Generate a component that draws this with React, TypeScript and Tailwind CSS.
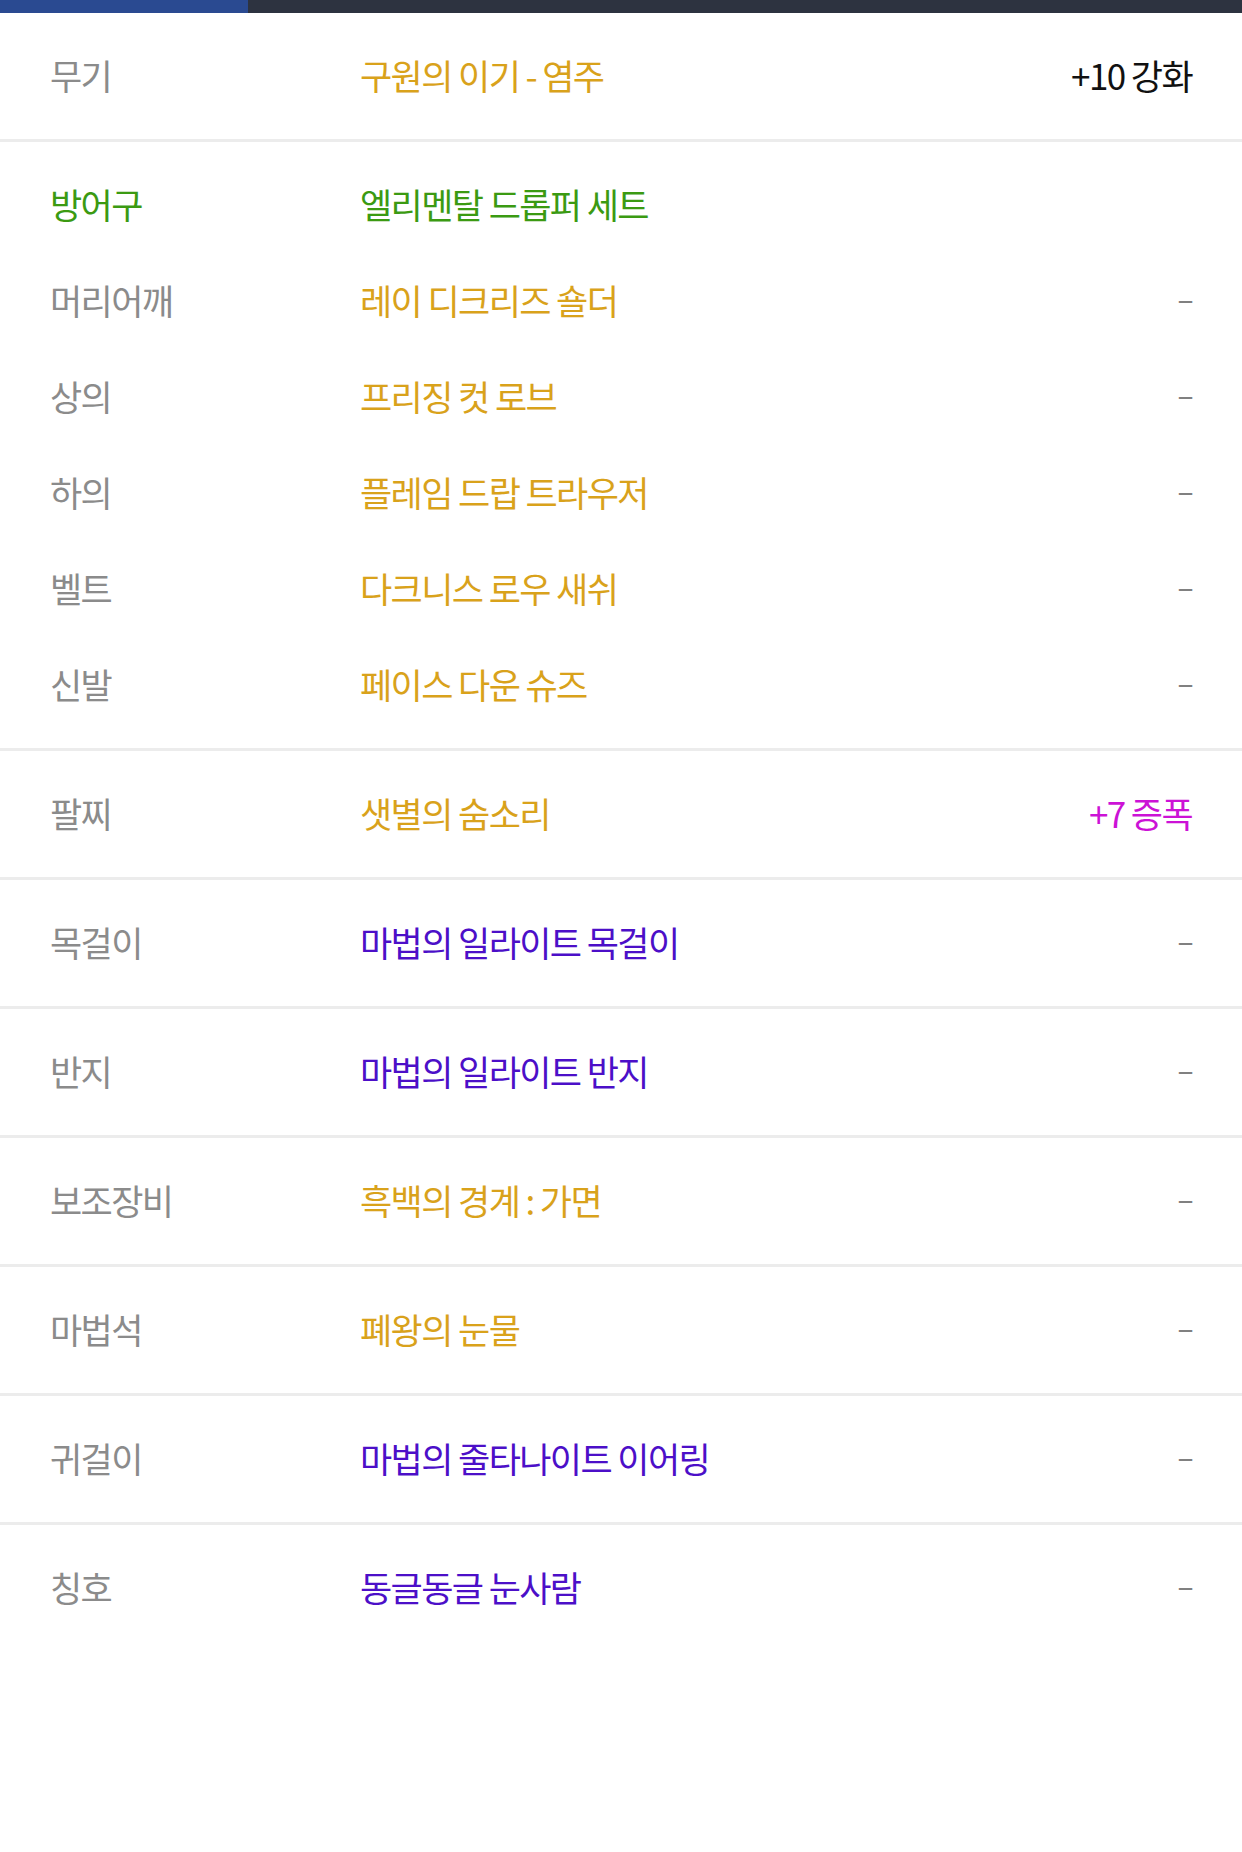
import React from "react";

type Row = { label: string; value: string; color: string; labelColor?: string; right?: string; rightColor?: string };

const GOLD = "text-[#d9a21b]";
const GREEN = "text-[#3b9a12]";
const PURPLE = "text-[#4c0fc8]";

const sections: Row[][] = [
  [{ label: "무기", value: "구원의 이기 - 염주", color: GOLD, right: "+10 강화", rightColor: "text-[#111111]" }],
  [
    { label: "방어구", value: "엘리멘탈 드롭퍼 세트", color: GREEN, labelColor: GREEN, right: "" },
    { label: "머리어깨", value: "레이 디크리즈 숄더", color: GOLD },
    { label: "상의", value: "프리징 컷 로브", color: GOLD },
    { label: "하의", value: "플레임 드랍 트라우저", color: GOLD },
    { label: "벨트", value: "다크니스 로우 새쉬", color: GOLD },
    { label: "신발", value: "페이스 다운 슈즈", color: GOLD },
  ],
  [{ label: "팔찌", value: "샛별의 숨소리", color: GOLD, right: "+7 증폭", rightColor: "text-[#cc12d6]" }],
  [{ label: "목걸이", value: "마법의 일라이트 목걸이", color: PURPLE }],
  [{ label: "반지", value: "마법의 일라이트 반지", color: PURPLE }],
  [{ label: "보조장비", value: "흑백의 경계 : 가면", color: GOLD }],
  [{ label: "마법석", value: "폐왕의 눈물", color: GOLD }],
  [{ label: "귀걸이", value: "마법의 줄타나이트 이어링", color: PURPLE }],
  [{ label: "칭호", value: "동글동글 눈사람", color: PURPLE }],
];

export default function App() {
  return (
    <div
      className="w-[1242px] h-[1852px] bg-white overflow-hidden"
      style={{ fontFamily: '"Noto Sans CJK KR", "Noto Sans", sans-serif' }}
    >
      <div className="flex h-[13px] bg-[#2d3340]">
        <div className="w-[248px] bg-[#2a4a91]" />
      </div>
      {sections.map((sec, si) => (
        <div
          key={si}
          className={
            "py-[15px] px-[50px] " +
            (si < sections.length - 1 ? "border-b-[3px] border-[#ececec]" : "")
          }
        >
          {sec.map((r, ri) => (
            <div
              key={ri}
              className="h-[96px] pb-[4px] flex items-center text-[35px] tracking-[-1.6px] leading-none"
            >
              <div className={"w-[310px] shrink-0 " + (r.labelColor ?? "text-[#8b8b8b]")}>{r.label}</div>
              <div className={"flex-1 " + r.color}>{r.value}</div>
              {r.right === undefined ? (
                <div className="shrink-0 text-[#808080] text-[30px] -translate-y-[2px]">–</div>
              ) : (
                <div className={"shrink-0 " + (r.rightColor ?? "")}>{r.right}</div>
              )}
            </div>
          ))}
        </div>
      ))}
    </div>
  );
}
